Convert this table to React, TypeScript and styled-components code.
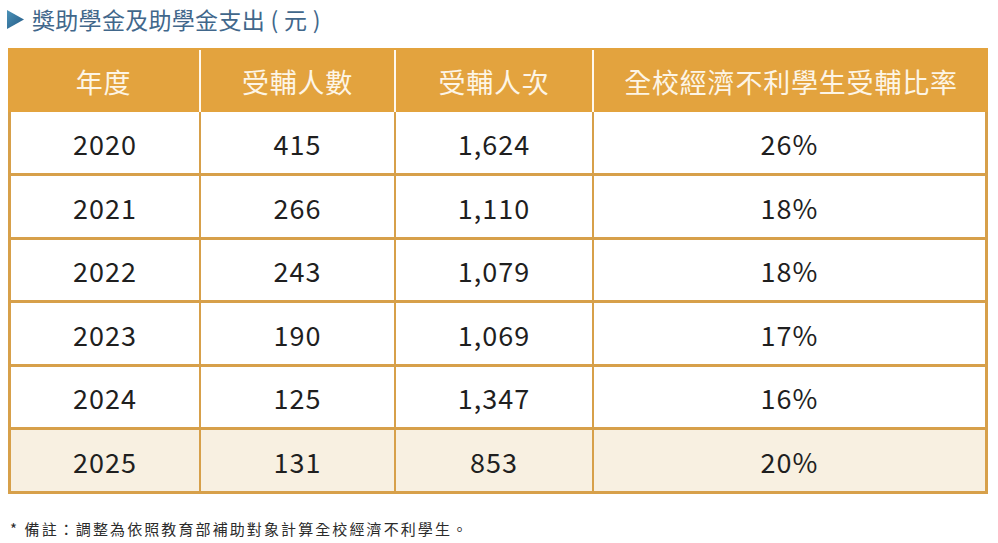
import React from "react";
import styled, { createGlobalStyle } from "styled-components";

const GlobalStyle = createGlobalStyle`
  html, body { margin: 0; padding: 0; background: #ffffff; }
  body { font-family: "Noto Sans CJK TC", "Noto Sans", sans-serif; }
`;

const Page = styled.div`
  width: 998px;
  height: 543px;
  padding: 7px 0 0 7px;
  box-sizing: border-box;
  display: flex;
  flex-direction: column;
`;

const Title = styled.h2`
  margin: 0;
  display: flex;
  align-items: center;
  gap: 8px;
  height: 24px;
  font-size: 23px;
  font-weight: 400;
  color: #41678b;
  letter-spacing: 0.3px;
  line-height: 1;
`;

const Table = styled.div`
  margin-top: 17px;
  margin-left: 1px;
  width: 980px;
  display: flex;
  flex-direction: column;
`;

const HeaderRow = styled.div`
  display: grid;
  grid-template-columns: 191px 195px 198px 396px;
  height: 64px;
  background: #e3a33e;
  padding-top: 2px;
  box-sizing: border-box;
`;

const HeaderCell = styled.div<{ $first?: boolean }>`
  display: flex;
  align-items: center;
  justify-content: center;
  color: #fdf5e6;
  font-size: 27px;
  font-weight: 400;
  letter-spacing: 0.8px;
  border-left: ${(p) => (p.$first ? "none" : "2px solid #fff8ec")};
`;

const Body = styled.div`
  border-left: 3px solid #d7a04a;
  border-right: 3px solid #d7a04a;
  display: flex;
  flex-direction: column;
`;

const Row = styled.div<{ $highlight?: boolean }>`
  display: grid;
  grid-template-columns: 188px 195px 198px 393px;
  height: 63.5px;
  box-sizing: border-box;
  border-bottom: 3px solid #d7a04a;
  background: ${(p) => (p.$highlight ? "#f8f0e1" : "#ffffff")};
  &:first-child { height: 64px; }
`;

const Cell = styled.div<{ $first?: boolean }>`
  display: flex;
  align-items: center;
  justify-content: center;
  color: #1f1f1f;
  font-size: 27px;
  font-weight: 400;
  letter-spacing: 1px;
  padding-top: 2px;
  border-left: ${(p) => (p.$first ? "none" : "2px solid #d7a04a")};
`;

const Note = styled.p`
  margin: 27px 0 0 3px;
  font-size: 15px;
  letter-spacing: 2.1px;
  color: #2b2b2b;
  line-height: 1;
`;

const Arrow = () => (
  <svg width="17" height="19" viewBox="0 0 17 19">
    <defs>
      <linearGradient id="ag" x1="0" y1="0" x2="1" y2="1">
        <stop offset="0" stopColor="#4c93b8" />
        <stop offset="1" stopColor="#245a86" />
      </linearGradient>
    </defs>
    <polygon points="0,0 17,9.5 0,19" fill="url(#ag)" />
  </svg>
);

const headers = ["年度", "受輔人數", "受輔人次", "全校經濟不利學生受輔比率"];

const rows: [string, string, string, string][] = [
  ["2020", "415", "1,624", "26%"],
  ["2021", "266", "1,110", "18%"],
  ["2022", "243", "1,079", "18%"],
  ["2023", "190", "1,069", "17%"],
  ["2024", "125", "1,347", "16%"],
  ["2025", "131", "853", "20%"],
];

export default function App() {
  return (
    <Page>
      <GlobalStyle />
      <Title>
        <Arrow />
        <span>獎助學金及助學金支出 ( 元 )</span>
      </Title>
      <Table>
        <HeaderRow>
          {headers.map((h, i) => (
            <HeaderCell key={h} $first={i === 0}>
              {h}
            </HeaderCell>
          ))}
        </HeaderRow>
        <Body>
          {rows.map((r, ri) => (
            <Row key={r[0]} $highlight={ri === rows.length - 1}>
              {r.map((c, ci) => (
                <Cell key={ci} $first={ci === 0}>
                  {c}
                </Cell>
              ))}
            </Row>
          ))}
        </Body>
      </Table>
      <Note>* 備註：調整為依照教育部補助對象計算全校經濟不利學生。</Note>
    </Page>
  );
}
